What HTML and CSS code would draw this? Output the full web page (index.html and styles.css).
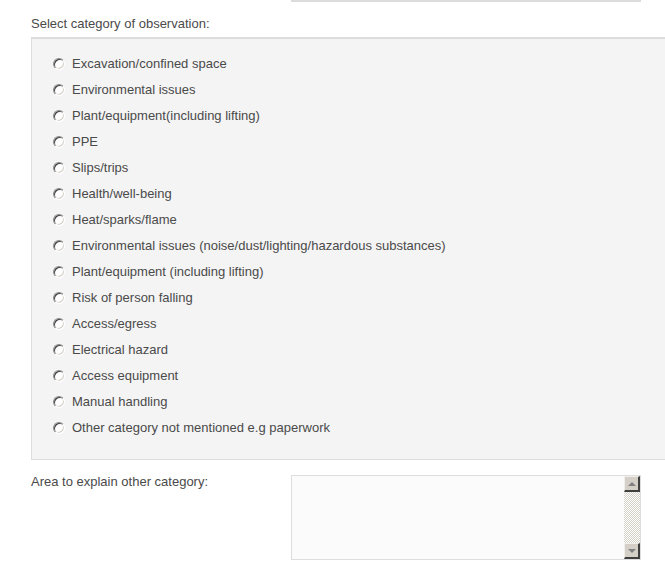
FILE: index.html
```html
<!DOCTYPE html>
<html>
<head>
<meta charset="utf-8">
<link rel="stylesheet" href="styles.css">
</head>
<body>
<div class="prev-field"></div>
<div class="label-top">Select category of observation:</div>
<div class="fieldset">
  <label class="opt"><span class="radio"></span>Excavation/confined space</label>
  <label class="opt"><span class="radio"></span>Environmental issues</label>
  <label class="opt"><span class="radio"></span>Plant/equipment(including lifting)</label>
  <label class="opt"><span class="radio"></span>PPE</label>
  <label class="opt"><span class="radio"></span>Slips/trips</label>
  <label class="opt"><span class="radio"></span>Health/well-being</label>
  <label class="opt"><span class="radio"></span>Heat/sparks/flame</label>
  <label class="opt"><span class="radio"></span>Environmental issues (noise/dust/lighting/hazardous substances)</label>
  <label class="opt"><span class="radio"></span>Plant/equipment (including lifting)</label>
  <label class="opt"><span class="radio"></span>Risk of person falling</label>
  <label class="opt"><span class="radio"></span>Access/egress</label>
  <label class="opt"><span class="radio"></span>Electrical hazard</label>
  <label class="opt"><span class="radio"></span>Access equipment</label>
  <label class="opt"><span class="radio"></span>Manual handling</label>
  <label class="opt"><span class="radio"></span>Other category not mentioned e.g paperwork</label>
</div>
<div class="area-row">
  <div class="area-label">Area to explain other category:</div>
  <div class="textarea">
    <div class="text"></div>
    <div class="scrollbar">
      <div class="sb-btn"><svg width="8" height="4" viewBox="0 0 8 4"><path d="M0 4 L4 0 L8 4 Z" fill="#808080"/></svg></div>
      <div class="sb-track"></div>
      <div class="sb-btn"><svg width="8" height="4" viewBox="0 0 8 4"><path d="M0 0 L8 0 L4 4 Z" fill="#808080"/></svg></div>
    </div>
  </div>
</div>
</body>
</html>
```
FILE: styles.css
```css
html, body {
  margin: 0;
  padding: 0;
  background: #fff;
  font-family: "Liberation Sans", Arial, sans-serif;
  font-size: 13px;
  color: #4a4a4a;
  overflow: hidden;
}
.prev-field {
  margin-left: 291px;
  width: 350px;
  height: 0;
  border-bottom: 2px solid #dcdcdc;
}
.label-top {
  margin: 12px 0 0 31px;
  height: 20px;
  line-height: 20px;
}
.fieldset {
  margin: 3px 0 0 31px;
  width: 640px;
  box-sizing: border-box;
  border: 1px solid #dddddd;
  border-top-width: 2px;
  border-right: none;
  background: #f4f4f4;
  padding: 12px 0 18px 21px;
  display: flex;
  flex-direction: column;
}
.opt {
  display: flex;
  align-items: center;
  height: 26px;
  line-height: 26px;
}
.radio {
  width: 12px;
  height: 12px;
  box-sizing: border-box;
  border-radius: 50%;
  border: 1px solid #ffffff;
  border-top-color: #8a8a8a;
  border-left-color: #8a8a8a;
  box-shadow: inset 1px 1px 0 #404040, inset -1px -1px 0 #d4d0c8;
  background: #fff;
  margin-right: 7px;
  margin-top: -1px;
}
.area-row {
  display: flex;
  margin-top: 15px;
}
.area-label {
  margin-left: 31px;
  width: 260px;
  line-height: 14px;
}
.textarea {
  width: 350px;
  height: 85px;
  box-sizing: border-box;
  border: 1px solid #dddddd;
  background: #fbfbfb;
  display: flex;
}
.text { flex: 1; }
.scrollbar {
  width: 16px;
  display: flex;
  flex-direction: column;
}
.sb-btn {
  width: 16px;
  height: 16px;
  box-sizing: border-box;
  background: #d4d0c8;
  border: 1px solid #f0efec;
  border-right: 2px solid #404040;
  border-bottom: 2px solid #404040;
  display: flex;
  align-items: center;
  justify-content: center;
}
.sb-track {
  flex: 1;
  background-color: #fff;
  background-image: repeating-conic-gradient(#d4d0c8 0 25%, #ffffff 0 50%);
  background-size: 2px 2px;
}
```
